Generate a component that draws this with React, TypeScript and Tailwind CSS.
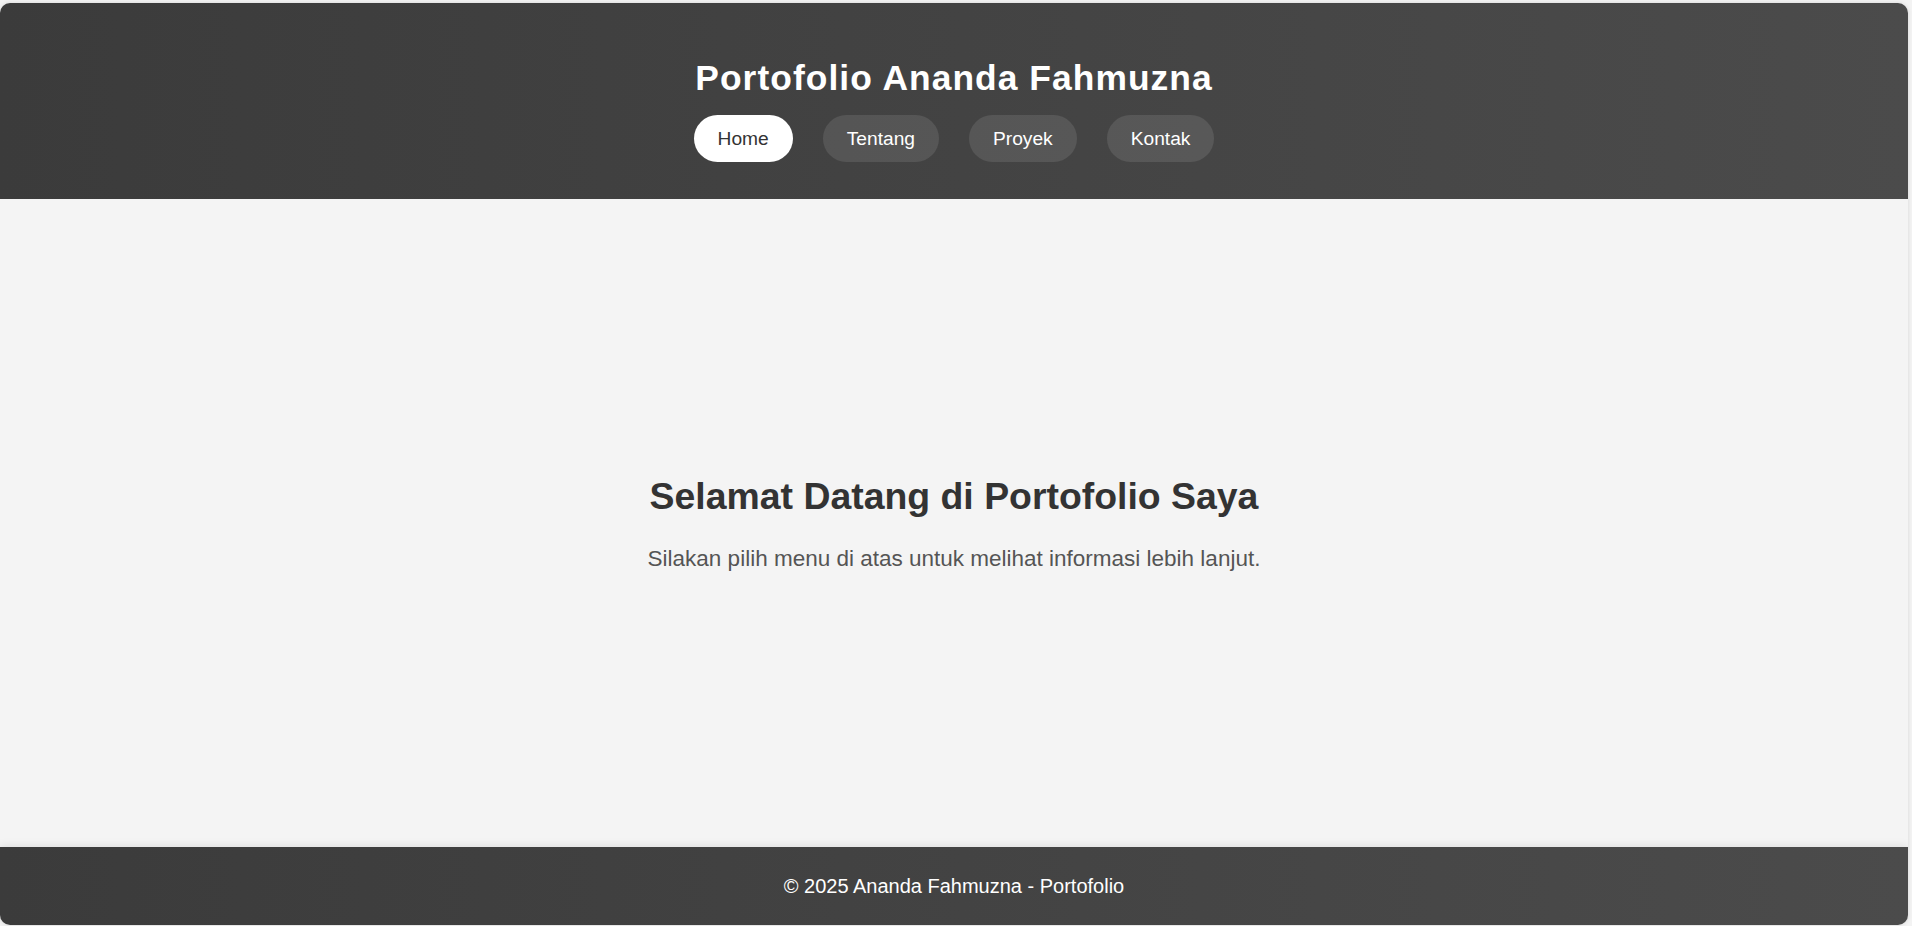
import React from 'react';

const links = ['Home', 'Tentang', 'Proyek', 'Kontak'];

const App: React.FC = () => {
  return (
    <div className="h-[926px] w-[1912px] bg-[#f3f3f3] pt-[3px] pr-[4px] pb-[1px] font-['Liberation_Sans',Arial,sans-serif]">
      <div className="flex h-full flex-col overflow-hidden rounded-[10px] bg-[#f4f4f4] shadow-[0_0_4px_rgba(0,0,0,0.12)]">
        <header className="flex h-[196px] flex-col items-center bg-gradient-to-r from-[#3b3b3b] to-[#4b4b4b] pt-[55px]">
          <h1 className="text-[35.4px] font-bold leading-[40px] tracking-[1.05px] text-white">
            Portofolio Ananda Fahmuzna
          </h1>
          <nav className="mt-[17px] flex gap-[30px]">
            {links.map((label, i) => (
              <a
                key={label}
                href="#"
                className={
                  i === 0
                    ? 'rounded-full bg-white px-[24px] py-[10px] text-[19.2px] leading-[27px] text-[#333]'
                    : 'rounded-full bg-white/10 px-[24px] py-[10px] text-[19.2px] leading-[27px] text-white'
                }
              >
                {label}
              </a>
            ))}
          </nav>
        </header>

        <main className="flex flex-1 flex-col items-center justify-center">
          <h2 className="text-[37.4px] font-bold leading-[43px] text-[#333]">
            Selamat Datang di Portofolio Saya
          </h2>
          <p className="mt-[28px] text-[22.5px] leading-[26px] text-[#555]">
            Silakan pilih menu di atas untuk melihat informasi lebih lanjut.
          </p>
        </main>

        <footer className="flex h-[78px] items-center justify-center bg-gradient-to-r from-[#3b3b3b] to-[#4b4b4b] shadow-[0_-2px_8px_rgba(0,0,0,0.08)]">
          <p className="text-[20px] leading-[24px] text-white">© 2025 Ananda Fahmuzna - Portofolio</p>
        </footer>
      </div>
    </div>
  );
};

export default App;
